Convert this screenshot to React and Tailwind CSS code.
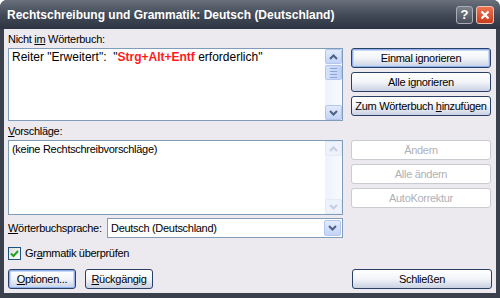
import React from "react";

const ui = { fontFamily: '"Liberation Sans", Arial, sans-serif' };

const Arrow = ({ dir = "down", color = "#4d6185" }) => (
  <svg width="9" height="6" viewBox="0 0 9 6">
    <path
      d={dir === "down" ? "M1 1 L4.5 4.5 L8 1" : "M1 5 L4.5 1.5 L8 5"}
      fill="none"
      stroke={color}
      strokeWidth="2"
    />
  </svg>
);

const Btn = ({ children, primary, disabled, className = "" }) => (
  <div
    className={`flex items-center justify-center h-[20px] rounded-[3px] border text-[11px] tracking-[-0.3px] ${
      disabled
        ? "border-[#c9cbd0] bg-white text-[#aeb1b6]"
        : "border-[#2a3f66] bg-gradient-to-b from-white via-[#f2f4f8] to-[#c9d1e2] text-black"
    } ${primary ? "shadow-[inset_0_0_0_1px_#8fb0e8,inset_0_0_0_2px_#c6d8f6]" : ""} ${className}`}
  >
    <span>{children}</span>
  </div>
);

const Scrollbar = ({ disabled }) => (
  <div className="w-[17px] flex flex-col bg-gradient-to-r from-[#eef2fb] to-[#f8faff]">
    <div
      className={`h-[15px] flex items-center justify-center rounded-[2px] border ${
        disabled ? "border-[#e4ebf8] bg-[#edf2fc]" : "border-[#b3c6ee] bg-gradient-to-b from-[#e3ebfc] to-[#c3d4f7]"
      }`}
    >
      <Arrow dir="up" color={disabled ? "#c4cfe4" : "#4d6185"} />
    </div>
    {!disabled && (
      <div className="mt-px h-[15px] flex flex-col items-center justify-center gap-[2px] rounded-[2px] border border-[#b3c6ee] bg-gradient-to-r from-[#d4e1fb] to-[#c0d2f6]">
        <div className="w-[7px] h-px bg-[#8ea5d4]" />
        <div className="w-[7px] h-px bg-[#8ea5d4]" />
        <div className="w-[7px] h-px bg-[#8ea5d4]" />
        <div className="w-[7px] h-px bg-[#8ea5d4]" />
      </div>
    )}
    <div className="flex-1" />
    <div
      className={`h-[15px] flex items-center justify-center rounded-[2px] border ${
        disabled ? "border-[#e4ebf8] bg-[#edf2fc]" : "border-[#b3c6ee] bg-gradient-to-b from-[#e3ebfc] to-[#c3d4f7]"
      }`}
    >
      <Arrow dir="down" color={disabled ? "#c4cfe4" : "#4d6185"} />
    </div>
  </div>
);

export default function App() {
  return (
    <div className="w-[500px] h-[298px] bg-white" style={ui}>
      <div className="w-[500px] h-[298px] flex flex-col rounded-t-[7px] bg-[#3a404c] overflow-hidden">
        {/* Title bar */}
        <div className="h-[29px] flex items-center pl-[7px] pr-[6px] bg-gradient-to-b from-[#6a717d] via-[#444b58] to-[#2e3441]">
          <span className="flex-1 text-white font-bold text-[12px] pt-[1px]">
            Rechtschreibung und Grammatik: Deutsch (Deutschland)
          </span>
          <div className="flex gap-[3px]">
            <div className="w-[17px] h-[18px] rounded-[3px] border border-[#a9aeb6] bg-gradient-to-b from-[#7c828c] to-[#4a505b] flex items-center justify-center text-white font-bold text-[13px] leading-none">
              ?
            </div>
            <div className="w-[18px] h-[18px] rounded-[3px] border border-[#f0c4b4] bg-gradient-to-b from-[#ee7250] to-[#c93b1d] flex items-center justify-center">
              <svg width="10" height="10" viewBox="0 0 10 10">
                <path d="M1.5 1.5 L8.5 8.5 M8.5 1.5 L1.5 8.5" stroke="white" strokeWidth="2.2" />
              </svg>
            </div>
          </div>
        </div>

        {/* Client area */}
        <div className="flex-1 mx-[4px] mb-[5px] bg-[#eceaee] flex flex-col px-[4px]">
          <div className="flex gap-[8px]">
            {/* Left column */}
            <div className="w-[335px] flex flex-col">
              <div className="mt-[3px] h-[14px] leading-[14px] text-[11px] tracking-[-0.3px]">
                Nicht <span className="underline">im</span> Wörterbuch:
              </div>
              <div className="mt-[2px] h-[73px] flex border border-[#7f9db9] bg-white">
                <div className="flex-1 px-[3px] pt-[1px] text-[12px] leading-[15px] whitespace-pre">
                  {'Reiter "Erweitert":  "'}
                  <span className="font-bold text-[#ff1a1a]">Strg+Alt+Entf</span>
                  {' erforderlich"'}
                </div>
                <Scrollbar />
              </div>
              <div className="mt-[3px] h-[14px] leading-[14px] text-[11px] tracking-[-0.3px]">
                <span className="underline">V</span>orschläge:
              </div>
              <div className="mt-[2px] h-[75px] flex border border-[#7f9db9] bg-white">
                <div className="flex-1 px-[3px] pt-[2px] text-[11px] tracking-[-0.3px] leading-[13px]">
                  (keine Rechtschreibvorschläge)
                </div>
                <Scrollbar disabled />
              </div>
              <div className="mt-[3px] flex items-center">
                <div className="w-[99px] text-[11px] tracking-[-0.3px]">
                  <span className="underline">W</span>örterbuchsprache:
                </div>
                <div className="flex-1 h-[20px] flex border border-[#7f9db9] bg-white">
                  <div className="flex-1 pl-[3px] text-[11px] tracking-[-0.3px] leading-[18px]">
                    Deutsch (Deutschland)
                  </div>
                  <div className="w-[17px] m-px flex items-center justify-center rounded-[2px] border border-[#b3c6ee] bg-gradient-to-b from-[#e3ebfc] to-[#c3d4f7]">
                    <Arrow dir="down" />
                  </div>
                </div>
              </div>
            </div>

            {/* Right column */}
            <div className="w-[140px] flex flex-col pt-[19px]">
              <Btn primary>
                Einmal i<span className="underline">g</span>norieren
              </Btn>
              <Btn className="mt-[4px]">
                Alle i<span className="underline">g</span>norieren
              </Btn>
              <Btn className="mt-[4px]">
                Zum Wörterbuch <span className="underline">h</span>inzufügen
              </Btn>
              <Btn disabled className="mt-[24px]">
                Ändern
              </Btn>
              <Btn disabled className="mt-[4px]">
                Alle ändern
              </Btn>
              <Btn disabled className="mt-[4px]">
                AutoKorrektur
              </Btn>
            </div>
          </div>

          {/* Checkbox */}
          <div className="mt-[9px] flex items-center gap-[4px] h-[13px]">
            <div className="w-[13px] h-[13px] border border-[#1c5180] bg-gradient-to-br from-[#dcdcd7] to-white flex items-center justify-center">
              <svg width="9" height="9" viewBox="0 0 9 9">
                <path d="M1 4.5 L3.5 7 L8 2" fill="none" stroke="#21a121" strokeWidth="2" />
              </svg>
            </div>
            <span className="text-[11px] tracking-[-0.3px]">
              Gr<span className="underline">a</span>mmatik überprüfen
            </span>
          </div>

          {/* Bottom buttons */}
          <div className="mt-[9px] flex">
            <Btn primary className="w-[68px]">
              <span className="underline">O</span>ptionen...
            </Btn>
            <Btn className="ml-[9px] w-[68px]">
              <span className="underline">R</span>ückgängig
            </Btn>
            <div className="flex-1" />
            <Btn className="w-[140px]">Schließen</Btn>
          </div>
        </div>
      </div>
    </div>
  );
}
